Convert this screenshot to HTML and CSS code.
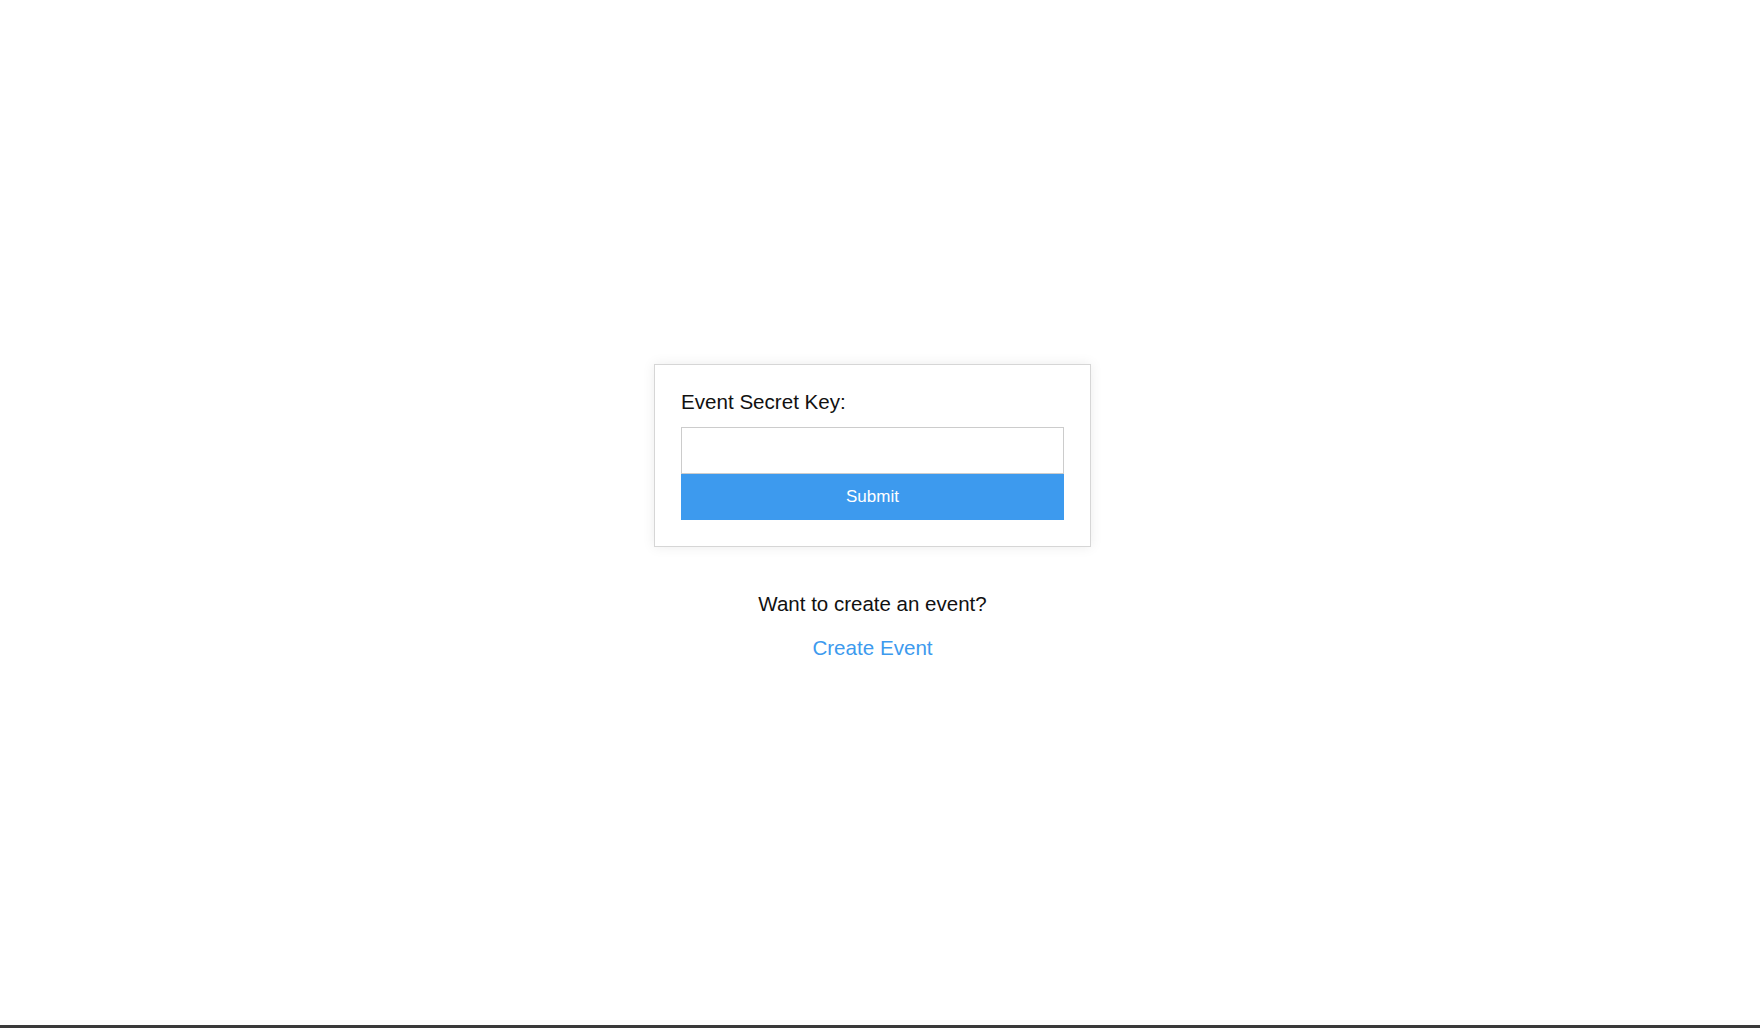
FILE: index.html
```html
<!DOCTYPE html>
<html lang="en">
<head>
<meta charset="utf-8">
<title>Event</title>
<link rel="stylesheet" href="styles.css">
</head>
<body>
<main class="page">
  <form class="card">
    <label class="card-label" for="key">Event Secret Key:</label>
    <input class="card-input" id="key" type="text">
    <button class="card-button" type="button">Submit</button>
  </form>
  <p class="prompt">Want to create an event?</p>
  <a class="create-link" href="#">Create Event</a>
</main>
<div class="bottom-bar"></div>
</body>
</html>
```

FILE: styles.css
```css
html, body {
  margin: 0;
  padding: 0;
  background: #ffffff;
}

body {
  font-family: "Liberation Sans", Arial, sans-serif;
  color: #111111;
}

.page {
  height: 1023px;
  margin-bottom: 2px;
  box-sizing: border-box;
  padding-right: 15px;
  display: flex;
  flex-direction: column;
  align-items: center;
  justify-content: center;
}

.card {
  width: 383px;
  padding: 26px;
  border: 1px solid #d6d6d6;
  box-shadow: 0 0 12px rgba(0, 0, 0, 0.08);
  background: #ffffff;
  display: flex;
  flex-direction: column;
  margin: 0;
}

.card-label {
  display: block;
  font-size: 20.6px;
  line-height: 21px;
  margin-bottom: 15px;
  color: #111111;
}

.card-input {
  box-sizing: border-box;
  width: 383px;
  height: 47px;
  margin: 0;
  border: 1px solid #cccccc;
  padding: 0 10px;
  font-family: "Liberation Sans", Arial, sans-serif;
  font-size: 17px;
  outline: none;
  background: #ffffff;
}

.card-button {
  box-sizing: border-box;
  width: 383px;
  height: 46px;
  margin: 0;
  border: none;
  background: #3d9aee;
  color: #ffffff;
  font-family: "Liberation Sans", Arial, sans-serif;
  font-size: 17px;
  cursor: pointer;
}

.prompt {
  margin: 45px 0 0 0;
  font-size: 20.5px;
  line-height: 23px;
  color: #111111;
}

.create-link {
  margin-top: 21px;
  font-size: 20.6px;
  line-height: 23px;
  color: #3d9aee;
  text-decoration: none;
}

.bottom-bar {
  height: 3px;
  background: #3a3a3a;
}
```
